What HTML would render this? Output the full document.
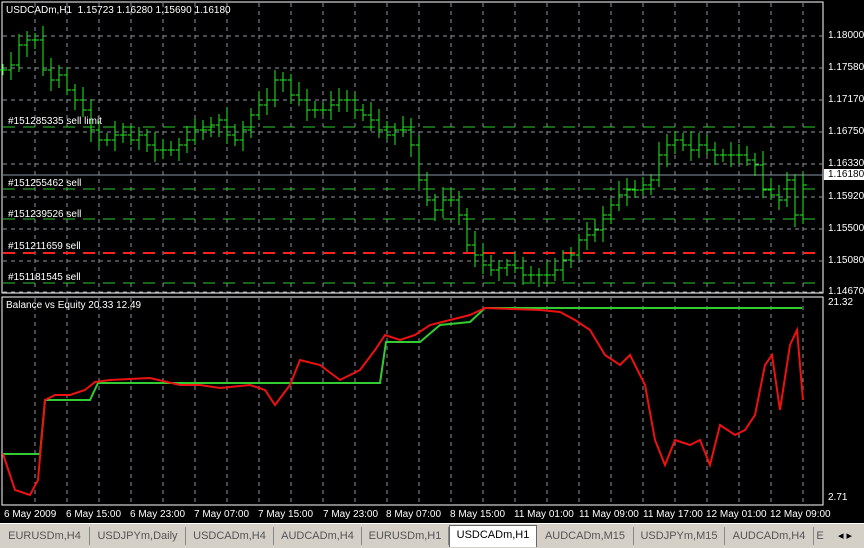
<!DOCTYPE html>
<html><head><style>
body{margin:0;width:864px;height:547px;background:#000;overflow:hidden;font-family:"Liberation Sans",Tahoma,sans-serif;font-size:10px;position:relative}
.t{position:absolute;color:#fff;white-space:nowrap;font-size:10px}
#tabs{position:absolute;left:0;top:523px;width:864px;height:24px;background:#d4d0c8;border-top:1px solid #fff}
.tab{position:absolute;top:3px;height:18px;line-height:18px;color:#555;font-size:11px;text-align:center;border-right:1px solid #888}
.act{background:#fff;color:#000;top:1px;height:21px;border:1px solid #666;border-bottom:none}
</style></head><body>
<svg id="s" width="864" height="547" style="position:absolute;left:0;top:0">
<rect x="2" y="2" width="821" height="291" fill="none" stroke="#fff"/>
<rect x="2" y="297" width="821" height="208" fill="none" stroke="#fff"/>
<g id="grid" stroke="#8a94a0" stroke-dasharray="4,4"></g>
<line x1="3" y1="175" x2="823" y2="175" stroke="#8a96a3"/>
<g stroke-dasharray="12,8" stroke-width="1">
<line x1="3" y1="127" x2="822" y2="127" stroke="#2ecc2e"/>
<line x1="3" y1="189" x2="822" y2="189" stroke="#2ecc2e"/>
<line x1="3" y1="219" x2="822" y2="219" stroke="#2ecc2e"/>
<line x1="3" y1="253" x2="822" y2="253" stroke="#ff2020" stroke-width="2"/>
<line x1="3" y1="283" x2="822" y2="283" stroke="#2ecc2e"/>
</g>
<path id="bars" stroke="#22ee22" fill="none" stroke-width="1"/>
<polyline id="bal" stroke="#33cc33" stroke-width="2" fill="none"/>
<polyline id="eq" stroke="#ee1111" stroke-width="2" fill="none"/>
</svg>
<div class="t" style="left:6px;top:5px">USDCADm,H1 &nbsp;1.15723 1.16280 1.15690 1.16180</div>
<div class="t" style="left:8px;top:116px">#151285335 sell limit</div>
<div class="t" style="left:8px;top:178px">#151255462 sell</div>
<div class="t" style="left:8px;top:209px">#151239526 sell</div>
<div class="t" style="left:8px;top:241px">#151211659 sell</div>
<div class="t" style="left:8px;top:272px">#151181545 sell</div>
<div class="t" style="left:6px;top:300px">Balance vs Equity 20.33 12.49</div>
<div class="t" style="left:828px;top:30px">1.18000</div>
<div class="t" style="left:828px;top:62px">1.17580</div>
<div class="t" style="left:828px;top:94px">1.17170</div>
<div class="t" style="left:828px;top:126px">1.16750</div>
<div class="t" style="left:828px;top:158px">1.16330</div>
<div class="t" style="left:824px;top:169px;background:#fff;color:#000;padding:0 3px 0 4px">1.16180</div>
<div class="t" style="left:828px;top:191px">1.15920</div>
<div class="t" style="left:828px;top:223px">1.15500</div>
<div class="t" style="left:828px;top:255px">1.15080</div>
<div class="t" style="left:828px;top:286px">1.14670</div>
<div class="t" style="left:828px;top:297px">21.32</div>
<div class="t" style="left:828px;top:492px">2.71</div>
<div id="dates"></div>
<div id="tabs">
<div class="tab" style="left:0;width:89px">EURUSDm,H4</div>
<div class="tab" style="left:90px;width:95px">USDJPYm,Daily</div>
<div class="tab" style="left:186px;width:87px">USDCADm,H4</div>
<div class="tab" style="left:274px;width:87px">AUDCADm,H4</div>
<div class="tab" style="left:362px;width:86px">EURUSDm,H1</div>
<div class="tab act" style="left:449px;width:86px">USDCADm,H1</div>
<div class="tab" style="left:537px;width:96px">AUDCADm,M15</div>
<div class="tab" style="left:634px;width:90px">USDJPYm,M15</div>
<div class="tab" style="left:725px;width:88px">AUDCADm,H4</div>
<div class="tab" style="left:814px;width:12px;border:none">E</div>
<div class="tab" style="left:830px;width:30px;border:none;color:#000">◂ ▸</div>
</div>
<script>
var g=document.getElementById('grid'),h='';
[36,68,100,132,164,197,229,261,292].forEach(function(y){h+='<line x1="3" y1="'+y+'" x2="822" y2="'+y+'"/>';});
for(var x=35;x<823;x+=32){h+='<line x1="'+x+'" y1="3" x2="'+x+'" y2="292"/><line x1="'+x+'" y1="298" x2="'+x+'" y2="504"/>';}
g.innerHTML=h;
var c=[70,65,45,40,40,70,80,75,90,100,110,130,140,140,135,135,140,135,145,150,150,150,145,140,130,130,125,120,135,140,130,115,105,100,80,80,95,100,110,110,110,105,100,100,110,115,120,130,135,130,130,145,180,200,210,200,200,215,245,255,265,270,268,265,268,275,275,275,275,270,260,255,240,235,230,215,205,195,190,190,185,180,155,145,140,145,150,145,150,155,155,155,155,160,165,190,195,200,180,215,185];
var d='',p=c[0];
for(var i=0;i<c.length;i++){var x=3+i*8,o=p,cl=c[i];var hi=Math.min(o,cl)-6-(i*7%9),lo=Math.max(o,cl)+5+(i*5%8);d+='M'+x+' '+hi+'V'+lo+'M'+(x-3)+' '+o+'H'+x+'M'+x+' '+cl+'H'+(x+4);p=cl;}
document.getElementById('bars').setAttribute('d',d);
document.getElementById('bal').setAttribute('points','3,454 40,454 45,400 90,400 98,383 380,383 386,342 420,342 440,325 470,322 485,308 802,308');
document.getElementById('eq').setAttribute('points','3,454 15,490 30,495 38,480 45,400 55,395 70,395 85,390 95,382 110,380 150,378 180,385 200,385 220,388 250,385 265,390 275,405 290,385 300,360 320,365 340,380 360,370 375,350 385,335 400,340 415,335 430,325 450,320 470,315 485,308 540,310 560,312 575,320 590,330 605,355 620,365 630,355 645,385 655,440 665,465 675,440 690,445 700,440 710,465 720,425 735,435 745,430 755,415 765,365 772,355 780,410 790,345 797,330 803,400');
var L=[[4,'6 May 2009'],[66,'6 May 15:00'],[130,'6 May 23:00'],[194,'7 May 07:00'],[258,'7 May 15:00'],[323,'7 May 23:00'],[386,'8 May 07:00'],[450,'8 May 15:00'],[514,'11 May 01:00'],[579,'11 May 09:00'],[643,'11 May 17:00'],[706,'12 May 01:00'],[770,'12 May 09:00']],s='';
L.forEach(function(a){s+='<div class="t" style="left:'+a[0]+'px;top:509px">'+a[1]+'</div>';});
document.getElementById('dates').innerHTML=s;
</script>
</body></html>
